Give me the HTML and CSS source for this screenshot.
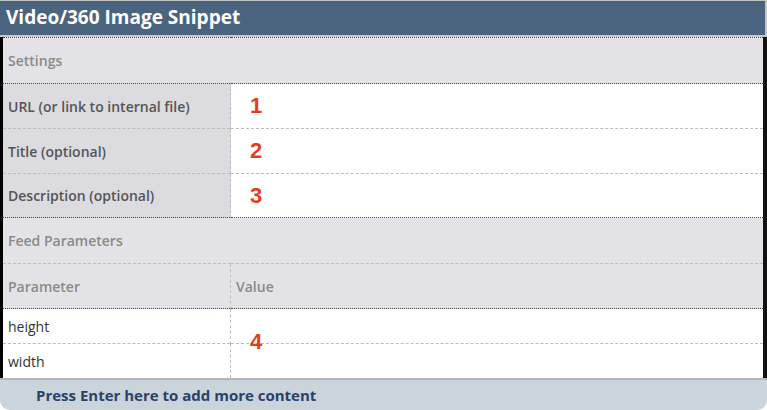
FILE: index.html
```html
<!DOCTYPE html>
<html lang="en">
<head>
  <meta charset="UTF-8" />
  <title>Video/360 Image Snippet</title>
  <link rel="stylesheet" href="styles.css">
</head>
<body>
  <div class="snippet">
    <div class="snippet-head">Video/360 Image Snippet</div>

    <div class="snippet-body">
      <table class="grid">
        <tr class="section">
          <td colspan="2">Settings</td>
        </tr>
        <tr class="field">
          <td class="label">URL (or link to internal file)</td>
          <td class="value"><span class="mark">1</span></td>
        </tr>
        <tr class="field">
          <td class="label">Title (optional)</td>
          <td class="value"><span class="mark">2</span></td>
        </tr>
        <tr class="field field-last">
          <td class="label">Description (optional)</td>
          <td class="value"><span class="mark">3</span></td>
        </tr>
        <tr class="section">
          <td colspan="2">Feed Parameters</td>
        </tr>
        <tr class="section cols">
          <td class="label">Parameter</td>
          <td class="value">Value</td>
        </tr>
        <tr class="param">
          <td class="label">height</td>
          <td class="value"><span class="mark mark-over">4</span></td>
        </tr>
        <tr class="param">
          <td class="label">width</td>
          <td class="value"></td>
        </tr>
      </table>
    </div>

    <div class="snippet-foot">Press Enter here to add more content</div>
  </div>
</body>
</html>
```

FILE: styles.css
```css
body {
  margin: 0;
  font-family: 'Open Sans', 'DejaVu Sans', sans-serif;
  background: #fff;
}
.snippet {
  width: 767px;
  height: 410px;
  overflow: hidden;
}
.snippet-head {
  height: 34px;
  line-height: 33px;
  padding-left: 6px;
  background-color: #4a6480;
  color: #fff;
  font-size: 19px;
  font-weight: 700;
  border-top: 1px solid #c2c2c2;
  border-right: 2px solid #c6c6c6;
  border-bottom: 2px solid #c8c8c8;
}
.snippet-body {
  height: 341px;
  border-left: 3px solid #000;
  border-right: 4px solid #111;
  background: #fff;
}
.grid {
  width: 100%;
  border-collapse: collapse;
  font-size: 14px;
}
.grid td {
  padding: 0 0 0 5px;
}
.section td {
  height: 45px;
  background-color: #e3e2e7;
  color: #8a8a8a;
  font-weight: 600;
  border-top: 1px dotted #444;
}
.section.cols td {
  height: 44px;
  border-top: 1px dashed #bcbcbc;
}
.section.cols .value {
  border-left: 1px dashed #bcbcbc;
}
.field td {
  height: 44px;
  border-top: 1px dashed #bcbcbc;
}
.field.field-last td {
  height: 43px;
}
.field:nth-child(2) td {
  border-top: 1px dotted #444;
}
.field .label {
  width: 222px;
  background-color: #dcdbe0;
  color: #555;
  font-weight: 600;
}
.field .value {
  background: #fff;
  border-left: 1px dashed #bcbcbc;
  padding-left: 19px;
}
.param td {
  height: 34px;
  color: #333;
  border-top: 1px dashed #bcbcbc;
}
.param:nth-child(7) td {
  border-top: 1px dotted #444;
}
.param .value {
  position: relative;
  border-left: 1px dashed #bcbcbc;
}
.mark {
  color: #e2401c;
  font-family: 'Liberation Sans', Arial, sans-serif;
  font-size: 22px;
  font-weight: 700;
  line-height: 1;
}
.mark-over {
  position: absolute;
  left: 19px;
  bottom: -10px;
}
.snippet-foot {
  height: 30px;
  line-height: 30px;
  padding-left: 36px;
  background-color: #cbd3db;
  border-top: 2px solid #b6b6b6;
  border-radius: 0 0 10px 10px;
  color: #29426a;
  font-size: 15px;
  font-weight: 700;
}
```
